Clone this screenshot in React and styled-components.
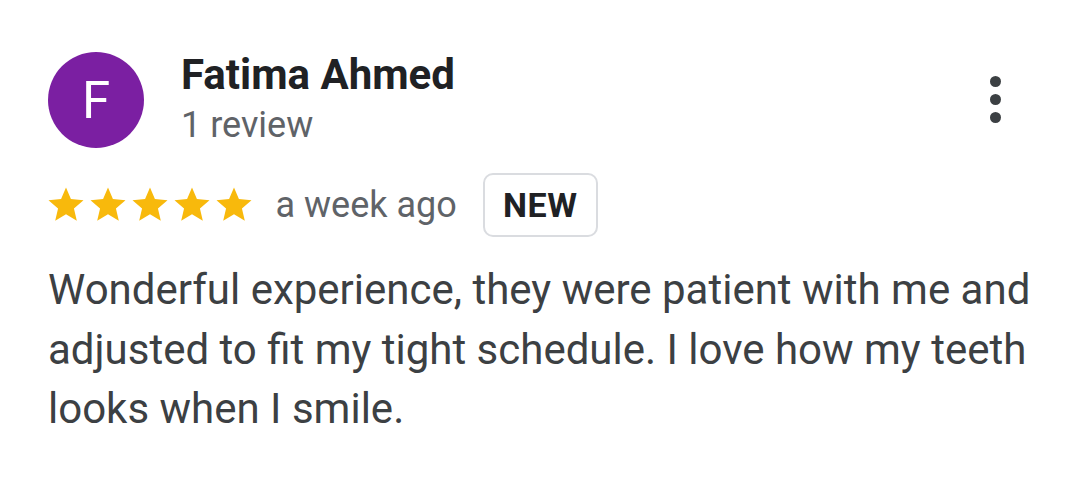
import React from "react";
import styled, { createGlobalStyle } from "styled-components";

const GlobalStyle = createGlobalStyle`
  body {
    margin: 0;
    background: #ffffff;
    font-family: Roboto, "Liberation Sans", sans-serif;
  }
`;

const Star = () => (
  <svg width="42" height="42" viewBox="0 0 24 24">
    <path
      fill="#f8b90c"
      d="M12 17.27L18.18 21l-1.64-7.03L22 9.24l-7.19-.61L12 2 9.19 8.63 2 9.24l5.46 4.73L5.82 21z"
    />
  </svg>
);

const App = () => {
  return (
    <>
      <GlobalStyle />
      <Card>
        <Header>
          <Avatar>F</Avatar>
          <Author>
            <Name>Fatima Ahmed</Name>
            <Meta>1 review</Meta>
          </Author>
          <MoreButton aria-label="More options">
            <Dot />
            <Dot />
            <Dot />
          </MoreButton>
        </Header>
        <RatingRow>
          <Stars>
            {[0, 1, 2, 3, 4].map((i) => (
              <Star key={i} />
            ))}
          </Stars>
          <When>a week ago</When>
          <Badge>NEW</Badge>
        </RatingRow>
        <Body>
          Wonderful experience, they were patient with me and adjusted to fit
          my tight schedule. I love how my teeth looks when I smile.
        </Body>
      </Card>
    </>
  );
};

export default App;

const Card = styled.div`
  width: 1080px;
  height: 498px;
  box-sizing: border-box;
  padding: 52px 0 0 48px;
`;

const Header = styled.div`
  display: flex;
  align-items: flex-start;
`;

const Avatar = styled.div`
  width: 96px;
  height: 96px;
  border-radius: 50%;
  background: #7b1fa2;
  color: #ffffff;
  display: flex;
  align-items: center;
  justify-content: center;
  font-size: 51px;
  font-weight: 400;
  flex-shrink: 0;
`;

const Author = styled.div`
  display: flex;
  flex-direction: column;
  margin-left: 37px;
  flex: 1;
`;

const Name = styled.div`
  font-size: 42px;
  font-weight: 700;
  color: #202124;
  line-height: 46px;
`;

const Meta = styled.div`
  font-size: 36px;
  color: #5f6368;
  line-height: 40px;
  margin-top: 7px;
`;

const MoreButton = styled.div`
  display: flex;
  flex-direction: column;
  gap: 7px;
  margin-top: 24px;
  margin-right: 79px;
`;

const Dot = styled.span`
  width: 11px;
  height: 11px;
  border-radius: 50%;
  background: #3c4043;
`;

const RatingRow = styled.div`
  display: flex;
  align-items: center;
  margin-top: 25px;
`;

const Stars = styled.div`
  display: flex;
  margin-left: -3.5px;
`;

const When = styled.span`
  font-size: 36px;
  color: #5f6368;
  margin-left: 21px;
`;

const Badge = styled.span`
  margin-left: 26px;
  box-sizing: border-box;
  border: 2px solid #dadce0;
  border-radius: 10px;
  width: 115px;
  height: 64px;
  display: flex;
  align-items: center;
  justify-content: center;
  font-size: 34px;
  font-weight: 700;
  color: #202124;
  letter-spacing: 0.5px;
`;

const Body = styled.p`
  margin: 23px 0 0;
  font-size: 42px;
  line-height: 59.5px;
  color: #3c4043;
`;
